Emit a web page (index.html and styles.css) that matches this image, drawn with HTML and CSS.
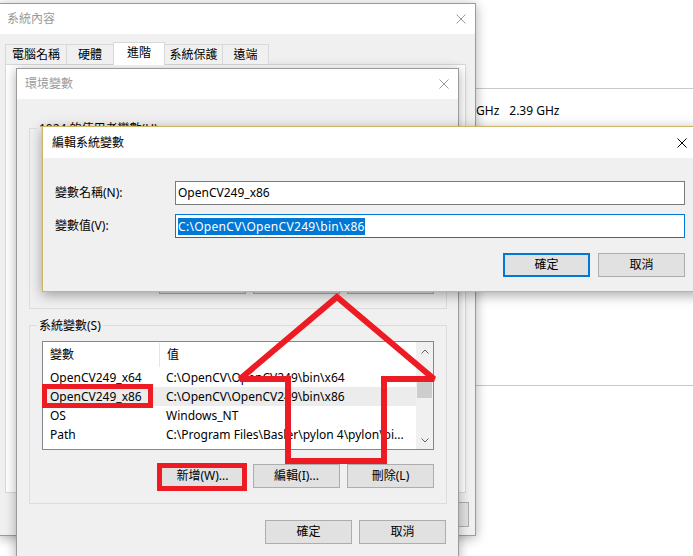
FILE: index.html
```html
<!DOCTYPE html>
<html lang="zh-Hant">
<head>
<meta charset="utf-8">
<title>環境變數</title>
<link rel="stylesheet" href="styles.css">
</head>
<body>
<div class="desk">

  <div class="bgwin">
    <div class="bg-band"></div>
    <div class="bg-line"><span>GHz</span><span class="ghz2">2.39 GHz</span></div>
  </div>

  <div class="win win1">
    <div class="titlebar">
      <span class="title dim">系統內容</span>
      <svg class="close" width="10" height="10" viewBox="0 0 10 10"><path d="M0.5 0.5L9.5 9.5M9.5 0.5L0.5 9.5" stroke="#9a9a9a" stroke-width="1" fill="none"/></svg>
    </div>
    <div class="w1body">
      <div class="tabs">
        <div class="tab t1">電腦名稱</div>
        <div class="tab t2">硬體</div>
        <div class="tab t3 sel">進階</div>
        <div class="tab t4">系統保護</div>
        <div class="tab t5">遠端</div>
      </div>
      <div class="panel"></div>
      <div class="w1btns">
        <div class="btn b25">確定</div>
        <div class="btn b25">取消</div>
        <div class="btn b25">套用(A)</div>
      </div>
    </div>
  </div>

  <div class="win win2">
    <div class="titlebar">
      <span class="title dim t2pad">環境變數</span>
      <svg class="close" width="10" height="10" viewBox="0 0 10 10"><path d="M0.5 0.5L9.5 9.5M9.5 0.5L0.5 9.5" stroke="#9a9a9a" stroke-width="1" fill="none"/></svg>
    </div>
    <div class="w2body">
      <div class="group g1">
        <span class="glabel">1024 的使用者變數(U)</span>
        <div class="list l1"></div>
        <div class="gbtns">
          <div class="btn">新增(N)...</div>
          <div class="btn">編輯(E)...</div>
          <div class="btn">刪除(D)</div>
        </div>
      </div>
      <div class="group g2">
        <span class="glabel">系統變數(S)</span>
        <div class="list l2">
          <div class="lmain">
            <div class="lrow lhead"><div class="c1 sep">變數</div><div class="c2">值</div></div>
            <div class="lrow"><div class="c1">OpenCV249_x64</div><div class="c2">C:\OpenCV\OpenCV249\bin\x64</div></div>
            <div class="lrow lsel"><div class="c1">OpenCV249_x86</div><div class="c2">C:\OpenCV\OpenCV249\bin\x86</div></div>
            <div class="lrow"><div class="c1">OS</div><div class="c2">Windows_NT</div></div>
            <div class="lrow"><div class="c1">Path</div><div class="c2">C:\Program Files\Basler\pylon 4\pylon\bi...</div></div>
          </div>
          <div class="sbar">
            <div class="sarrow"><svg width="8" height="5" viewBox="0 0 8 5"><path d="M0.5 4.5L4 1L7.5 4.5" stroke="#606060" fill="none"/></svg></div>
            <div class="sthumb"></div>
            <div class="sarrow sdown"><svg width="8" height="5" viewBox="0 0 8 5"><path d="M0.5 0.5L4 4L7.5 0.5" stroke="#606060" fill="none"/></svg></div>
          </div>
        </div>
        <div class="gbtns g2btns">
          <div class="btn">新增(W)...</div>
          <div class="btn">編輯(I)...</div>
          <div class="btn">刪除(L)</div>
        </div>
      </div>
      <div class="w2btns">
        <div class="btn">確定</div>
        <div class="btn">取消</div>
      </div>
    </div>
  </div>

  <div class="win dlg">
    <div class="titlebar dtitle">
      <span class="title">編輯系統變數</span>
      <svg class="close dclose" width="10" height="10" viewBox="0 0 10 10"><path d="M0.5 0.5L9.5 9.5M9.5 0.5L0.5 9.5" stroke="#000" stroke-width="1" fill="none"/></svg>
    </div>
    <div class="dbody">
      <div class="dform">
        <label class="dlabel">變數名稱(N):</label>
        <div class="field">OpenCV249_x86</div>
        <label class="dlabel">變數值(V):</label>
        <div class="field focus"><span class="seltext">C:\OpenCV\OpenCV249\bin\x86</span></div>
      </div>
      <div class="dbtns">
        <div class="btn default">確定</div>
        <div class="btn">取消</div>
      </div>
    </div>
  </div>

  <svg class="annot" width="693" height="556" viewBox="0 0 693 556">
    <g fill="none" stroke="#ed1c24">
      <rect x="44.5" y="386.5" width="106" height="19" stroke-width="5"/>
      <rect x="159.5" y="465.5" width="85" height="23" stroke-width="5"/>
      <polygon points="337,297 434,379 384,379 384,461 288,461 288,379 240,379" stroke-width="6" stroke-linejoin="miter" stroke-miterlimit="2"/>
    </g>
  </svg>

</div>
</body>
</html>
```

FILE: styles.css
```css
* { box-sizing: border-box; margin: 0; padding: 0; }

html, body {
  width: 693px;
  height: 556px;
  overflow: hidden;
  background: #fff;
}

body {
  font-family: "Noto Sans", "Noto Sans CJK TC", sans-serif;
  font-size: 12px;
  line-height: 16px;
  color: #000;
}

.desk {
  position: relative;
  width: 693px;
  height: 556px;
  overflow: hidden;
  background: #fff;
}

/* background window on the right */
.bgwin {
  position: absolute;
  left: 475px;
  top: 0;
  width: 218px;
  height: 556px;
  background: #fff;
}
.bg-band {
  height: 89px;
  border-bottom: 1px solid #c8c8c8;
}
.bg-line {
  height: 297px;
  border-bottom: 1px solid #c8c8c8;
  padding: 14px 0 0 1px;
  display: flex;
  align-items: flex-start;
}
.ghz2 { margin-left: 10px; }

/* generic window */
.win {
  position: absolute;
  background: #f0f0f0;
  border: 1px solid #9b9b9b;
  box-shadow: 0 2px 11px rgba(0, 0, 0, 0.32);
  display: flex;
  flex-direction: column;
}
.titlebar {
  flex: none;
  height: 30px;
  background: #fff;
  display: flex;
  align-items: center;
  padding-left: 7px;
}
.title { white-space: nowrap; }
.dim { color: #9a9a9a; }
.close { margin-left: auto; margin-right: 9px; flex: none; }

.btn {
  flex: none;
  width: 87px;
  height: 24px;
  background: #e1e1e1;
  border: 1px solid #adadad;
  display: flex;
  align-items: center;
  justify-content: center;
  white-space: nowrap;
  color: #000;
}
.b25 { height: 25px; }

/* window 1: 系統內容 */
.win1 {
  left: -1px;
  top: 3px;
  width: 477px;
  height: 533px;
}
.w1body {
  flex: 1;
  display: flex;
  flex-direction: column;
  padding: 8px 9px 0 5px;
}
.tabs {
  position: relative;
  z-index: 1;
  display: flex;
  align-items: flex-end;
  height: 22px;
}
.tab {
  height: 20px;
  border: 1px solid #d9d9d9;
  border-bottom: none;
  background: #f0f0f0;
  margin-left: -1px;
  text-align: center;
  line-height: 19px;
  white-space: nowrap;
}
.t1 { width: 62px; margin-left: 0; }
.t2 { width: 48px; }
.t3 { width: 52px; }
.t4 { width: 59px; }
.t5 { width: 47px; }
.tab.sel {
  position: relative;
  z-index: 2;
  height: 23px;
  margin-bottom: -1px;
  background: #fff;
  line-height: 19px;
}
.panel {
  flex: none;
  height: 429px;
  background: #fff;
  border: 1px solid #d9d9d9;
}
.w1btns {
  display: flex;
  justify-content: flex-end;
  gap: 7px;
  margin: 9px -3px 0 0;
}

/* window 2: 環境變數 */
.win2 {
  left: 16px;
  top: 68px;
  width: 443px;
  height: 520px;
}
.t2pad { padding-left: 1px; }
.w2body {
  flex: 1;
  display: flex;
  flex-direction: column;
  padding: 29px 11px 0 12px;
}
.group {
  position: relative;
  border: 1px solid #dcdcdc;
  padding: 15px 12px 14px 12px;
}
.g2 {
  margin-top: 16px;
  padding-bottom: 15px;
}
.glabel {
  position: absolute;
  top: -9px;
  left: 7px;
  padding: 0 2px;
  background: #f0f0f0;
  line-height: 17px;
  white-space: nowrap;
}
.list {
  background: #fff;
  border: 1px solid #828790;
}
.l1 { height: 111px; }
.l2 {
  height: 109px;
  display: flex;
}
.lmain {
  flex: 1;
  display: flex;
  flex-direction: column;
  min-width: 0;
}
.lrow {
  display: flex;
  height: 19px;
  line-height: 19px;
  white-space: nowrap;
}
.lhead {
  height: 26px;
  line-height: 26px;
}
.c1 {
  flex: none;
  width: 117px;
  padding-left: 7px;
}
.c2 {
  flex: 1;
  padding-left: 6px;
  overflow: hidden;
}
.lhead .c2 { padding-left: 7px; }
.sep {
  display: flex;
  align-items: center;
  border-right: 1px solid #e5e5e5;
  height: 24px;
  margin-top: 1px;
  line-height: 24px;
}
.lsel { background: #ececec; }
.sbar {
  flex: none;
  width: 17px;
  background: #f0f0f0;
  display: flex;
  flex-direction: column;
}
.sarrow {
  height: 17px;
  display: flex;
  align-items: center;
  justify-content: center;
  padding-top: 2px;
}
.sdown {
  margin-top: auto;
  padding-top: 0;
}
.sthumb {
  margin: 18px 1px 0 1px;
  height: 21px;
  background: #cdcdcd;
}
.gbtns {
  display: flex;
  justify-content: flex-end;
  gap: 7px;
  margin-top: 15px;
}
.g2btns { margin-top: 14px; }
.w2btns {
  display: flex;
  justify-content: flex-end;
  gap: 7px;
  margin: 16px 1px 0 0;
}

/* edit dialog: 編輯系統變數 */
.dlg {
  left: 42px;
  top: 126px;
  width: 662px;
  height: 166px;
  border-color: #cdb467;
  box-shadow: 0 3px 12px rgba(0, 0, 0, 0.35);
}
.dtitle {
  height: 31px;
  padding-left: 9px;
}
.dclose { margin-right: 16px; }
.dbody {
  flex: 1;
  padding: 23px 18px 0 12px;
  display: flex;
  flex-direction: column;
}
.dform {
  display: grid;
  grid-template-columns: 120px 510px;
  row-gap: 9px;
  align-items: center;
}
.dlabel { white-space: nowrap; }
.field {
  height: 24px;
  background: #fff;
  border: 1px solid #7a7a7a;
  padding-left: 2px;
  line-height: 22px;
  white-space: nowrap;
  display: flex;
  align-items: center;
}
.field.focus { border-color: #0078d7; }
.seltext {
  background: #0078d7;
  color: #fff;
  line-height: 17px;
  letter-spacing: 0.3px;
}
.dbtns {
  display: flex;
  justify-content: flex-end;
  gap: 8px;
  margin-top: 15px;
}
.btn.default {
  border: 2px solid #0078d7;
}

/* red annotations drawn over the screenshot */
.annot {
  position: absolute;
  left: 0;
  top: 0;
  pointer-events: none;
}
```
